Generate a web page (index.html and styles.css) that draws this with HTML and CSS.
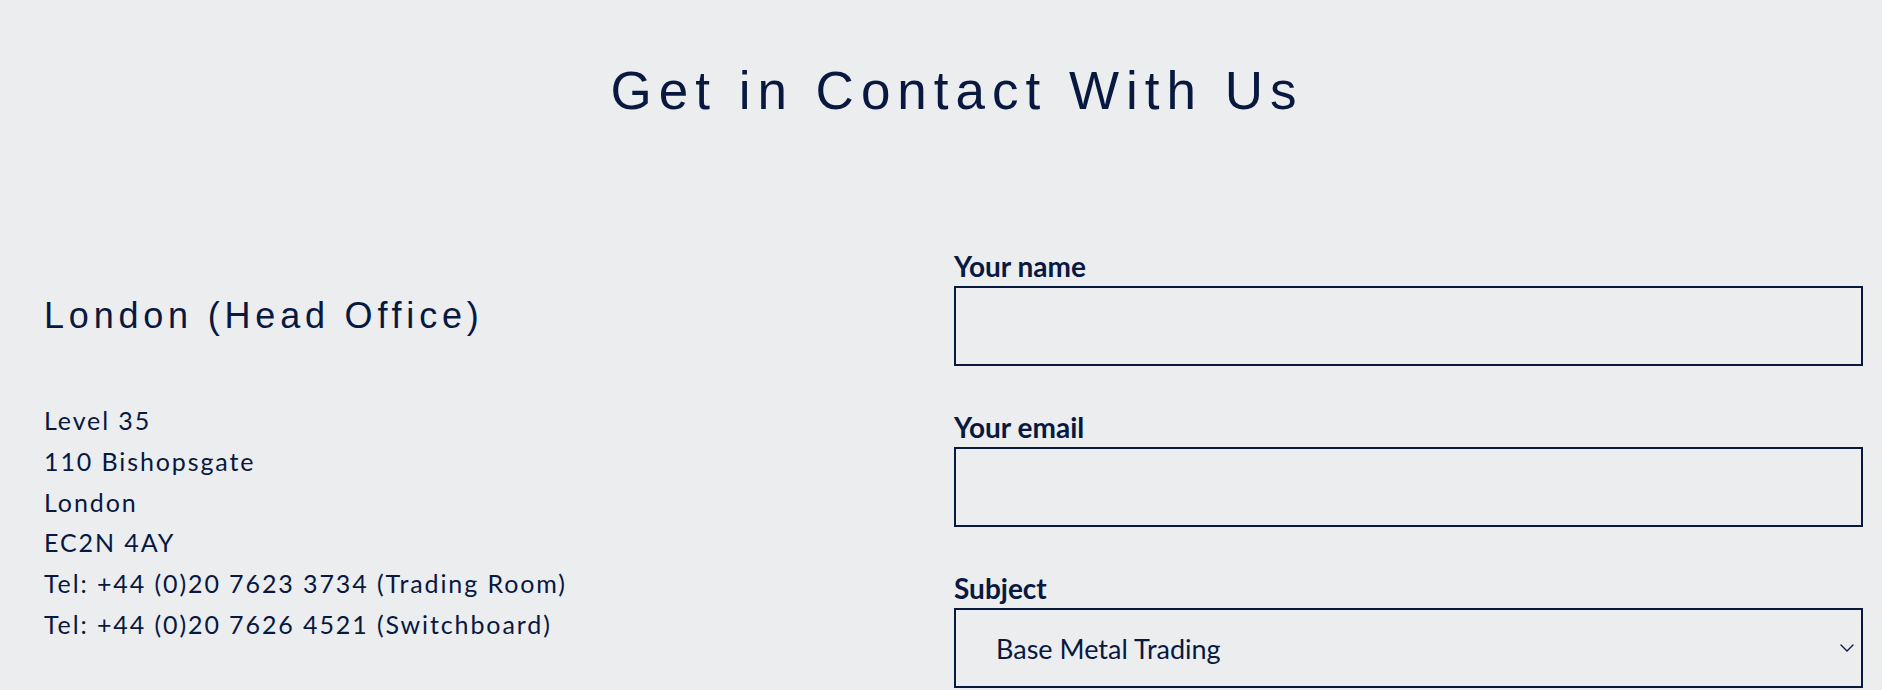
FILE: index.html
```html
<!DOCTYPE html>
<html lang="en">
<head>
<meta charset="utf-8">
<title>Get in Contact With Us</title>
<link rel="stylesheet" href="styles.css">
</head>
<body>
<main class="page">
  <h1 class="title">Get in Contact With Us</h1>
  <div class="contact">
    <section class="office">
      <h2 class="office-name">London (Head Office)</h2>
      <p class="address">Level 35<br>110 Bishopsgate<br>London<br>EC2N 4AY<br>Tel: +44 (0)20 7623 3734 (Trading Room)<br>Tel: +44 (0)20 7626 4521 (Switchboard)</p>
    </section>
    <form class="form">
      <div class="field">
        <label class="label" for="name">Your name</label>
        <input class="input" id="name" type="text">
      </div>
      <div class="field">
        <label class="label" for="email">Your email</label>
        <input class="input" id="email" type="email">
      </div>
      <div class="field">
        <label class="label" for="subject">Subject</label>
        <div class="select-wrap">
          <select class="input select" id="subject">
            <option>Base Metal Trading</option>
          </select>
          <svg class="chevron" viewBox="0 0 14 8" aria-hidden="true"><path d="M1 1 L7 7 L13 1" fill="none" stroke="#0a1a40" stroke-width="1.4" stroke-linecap="round" stroke-linejoin="round"/></svg>
        </div>
      </div>
    </form>
  </div>
</main>
</body>
</html>
```

FILE: styles.css
```css
html, body {
  margin: 0;
  overflow: hidden;
}
body {
  background: #ebedef;
  color: #08183f;
}
.page {
  padding: 60px 19px 0 44px;
}
.title {
  margin: 0;
  padding-left: 7px;
  font-family: "Liberation Sans", Arial, sans-serif;
  font-weight: 400;
  font-size: 53px;
  line-height: 62px;
  letter-spacing: 7px;
  text-align: center;
}
.contact {
  display: grid;
  grid-template-columns: 1fr 909px;
  margin-top: 127px;
}
.office-name {
  margin: 46px 0 0;
  font-family: "Liberation Sans", Arial, sans-serif;
  font-weight: 400;
  font-size: 36px;
  line-height: 42px;
  letter-spacing: 4.8px;
}
.address {
  margin: 63px 0 0;
  font-family: Lato, sans-serif;
  font-size: 25px;
  line-height: 40.8px;
  letter-spacing: 1.9px;
}
.form {
  margin: 0;
}
.field {
  margin-bottom: 44px;
}
.field:last-child {
  margin-bottom: 0;
}
.label {
  display: block;
  margin-bottom: 3px;
  font-family: Lato, sans-serif;
  font-weight: 700;
  font-size: 28px;
  line-height: 34px;
}
.input {
  display: block;
  box-sizing: border-box;
  width: 100%;
  height: 80px;
  margin: 0;
  padding: 0 40px;
  border: 2px solid #08183f;
  border-radius: 0;
  background: transparent;
  color: #08183f;
  font-family: Lato, sans-serif;
  font-size: 27px;
  outline: none;
}
.select-wrap {
  position: relative;
}
.select {
  appearance: none;
  -webkit-appearance: none;
  padding-left: 40px;
}
.chevron {
  position: absolute;
  right: 9px;
  top: 50%;
  width: 14px;
  height: 8px;
  margin-top: -4px;
  pointer-events: none;
}
```
